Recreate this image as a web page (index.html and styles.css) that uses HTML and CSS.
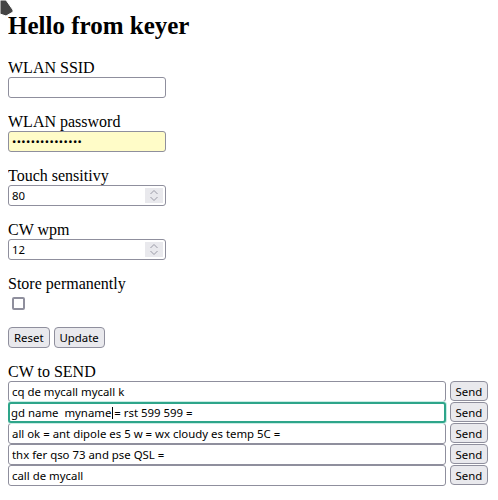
FILE: index.html
```html
<!DOCTYPE html>
<html lang="en">
<head>
<meta charset="utf-8">
<title>Hello from keyer</title>
<link rel="stylesheet" href="styles.css">
</head>
<body>
<svg class="pointer" width="16" height="18" viewBox="0 0 16 18" aria-hidden="true"><polygon points="0,0 6,0 13,10 13,12 6,16 0,14" fill="#444444" stroke="#ffffff" stroke-width="1"/></svg>
<h1 class="title">Hello from keyer</h1>
<form class="settings">
  <div class="field">
    <label class="lbl" for="ssid">WLAN SSID</label>
    <input class="txt" id="ssid" type="text">
  </div>
  <div class="field">
    <label class="lbl" for="pw">WLAN password</label>
    <input class="txt autofill" id="pw" type="password" value="123456789012345">
  </div>
  <div class="field">
    <label class="lbl" for="touch">Touch sensitivy</label>
    <div class="num">
      <input class="num-in" id="touch" type="text" value="80">
      <span class="spin"><svg width="10" height="13" viewBox="0 0 10 13"><path d="M1.5 5 L5 1.5 L8.5 5 M1.5 8 L5 11.5 L8.5 8" fill="none" stroke="#9a9aa6" stroke-width="1"/></svg></span>
    </div>
  </div>
  <div class="field">
    <label class="lbl" for="wpm">CW wpm</label>
    <div class="num">
      <input class="num-in" id="wpm" type="text" value="12">
      <span class="spin"><svg width="10" height="13" viewBox="0 0 10 13"><path d="M1.5 5 L5 1.5 L8.5 5 M1.5 8 L5 11.5 L8.5 8" fill="none" stroke="#9a9aa6" stroke-width="1"/></svg></span>
    </div>
  </div>
  <div class="field check-field">
    <label class="lbl" for="store">Store permanently</label>
    <input class="check" id="store" type="checkbox">
  </div>
  <div class="actions">
    <button class="btn" type="reset">Reset</button>
    <button class="btn" type="button">Update</button>
  </div>
  <div class="send-block">
    <label class="lbl">CW to SEND</label>
    <div class="row"><input class="msg" type="text" value="cq de mycall mycall k"><button class="btn send" type="button">Send</button></div>
    <div class="row"><span class="msg-wrap"><input class="msg focus" type="text" value="gd name  myname = rst 599 599 ="><span class="caret"></span></span><button class="btn send" type="button">Send</button></div>
    <div class="row"><input class="msg" type="text" value="all ok = ant dipole es 5 w = wx cloudy es temp 5C ="><button class="btn send" type="button">Send</button></div>
    <div class="row"><input class="msg" type="text" value="thx fer qso 73 and pse QSL ="><button class="btn send" type="button">Send</button></div>
    <div class="row"><input class="msg" type="text" value="call de mycall"><button class="btn send" type="button">Send</button></div>
  </div>
</form>
</body>
</html>
```

FILE: styles.css
```css
html { background: #ffffff; }
body {
  margin: 8px;
  font-family: "Liberation Serif", serif;
  font-size: 16px;
  color: #000000;
}
.pointer {
  position: absolute;
  left: 0;
  top: 0;
}
.title {
  font-size: 25px;
  line-height: 28px;
  font-weight: bold;
  margin: 4px 0 19px;
}
.field { margin-bottom: 15px; }
.lbl {
  display: block;
  line-height: 18px;
}
.txt, .num, .msg {
  box-sizing: border-box;
  height: 21px;
  border: 1px solid #8f8f9d;
  border-radius: 3px;
  background: #ffffff;
  font-family: "Noto Sans", sans-serif;
  font-size: 11.4px;
  color: #000000;
}
.txt {
  display: block;
  width: 158px;
  padding: 0 3px;
}
.autofill {
  background: #fffcc8;
  letter-spacing: 0.4px;
}
.num {
  display: flex;
  align-items: center;
  width: 158px;
  padding-right: 2px;
}
.num-in {
  flex: 1;
  min-width: 0;
  border: none;
  outline: none;
  background: transparent;
  padding: 0 3px;
  font: inherit;
  color: inherit;
}
.spin {
  display: flex;
  align-items: center;
  justify-content: center;
  width: 18px;
  height: 15px;
  background: #e9e9ed;
}
.check-field { margin-bottom: 17px; }
.check {
  appearance: none;
  display: block;
  box-sizing: border-box;
  width: 13px;
  height: 13px;
  margin: 4px 0 0 4px;
  border: 2px solid #8f8f9d;
  border-radius: 2px;
  background: #ffffff;
}
.actions {
  display: flex;
  gap: 4px;
  margin-bottom: 15px;
}
.btn {
  box-sizing: border-box;
  height: 21px;
  padding: 0 5px;
  border: 1px solid #8f8f9d;
  border-radius: 4px;
  background: #e9e9ed;
  font-family: "Noto Sans", sans-serif;
  font-size: 11.4px;
  color: #000000;
}
.row {
  display: flex;
  gap: 4px;
  align-items: flex-start;
}
.msg {
  flex: 0 0 438px;
  width: 438px;
  padding: 0 3px;
  outline: none;
}
.msg-wrap {
  position: relative;
  display: flex;
  flex: 0 0 438px;
}
.msg.focus {
  border: 2px solid #2ea58a;
  box-shadow: 0 0 0 1px #c8ece4;
  padding: 0 1px;
}
.caret {
  position: absolute;
  left: 104px;
  top: 5px;
  width: 1px;
  height: 12px;
  background: #000000;
}
.send {
  height: 20px;
  padding: 0 4.5px;
  margin-bottom: 1px;
}
```
